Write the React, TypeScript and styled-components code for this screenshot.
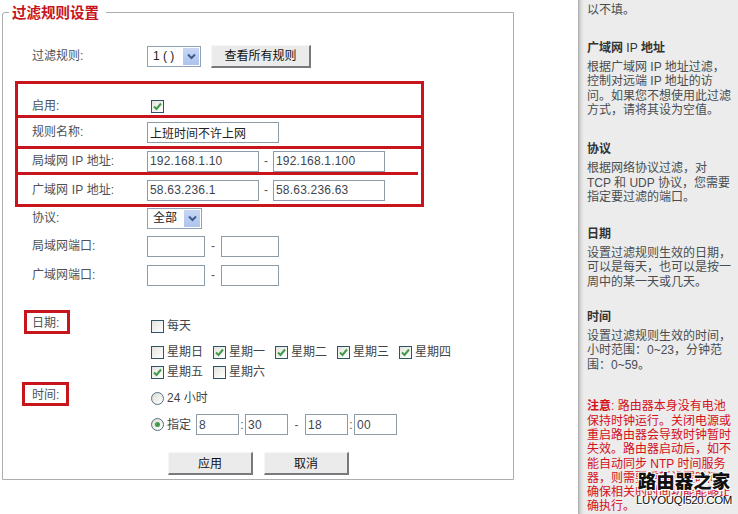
import React from "react";
import styled, { createGlobalStyle } from "styled-components";

const cjk = `"Liberation Sans", "Noto Sans CJK SC", sans-serif`;
const red = "#c8141c";

const Global = createGlobalStyle`
  html, body { margin: 0; padding: 0; height: 514px; overflow: hidden; background: #fff; }
  body { font: 12px/1.2 ${cjk}; color: #4a4f55; }
`;

const Page = styled.div`
  position: relative;
  display: flex;
  width: 738px;
  height: 514px;
  overflow: hidden;
`;
const Main = styled.main`
  width: 578px;
  flex: none;
  padding-left: 2px;
  box-sizing: border-box;
`;
const Frame = styled.fieldset`
  width: 512px;
  height: 480px;
  box-sizing: border-box;
  margin: 0;
  padding: 20px 0 0 29px;
  border: 1px solid #acacac;
  border-radius: 3px 0 0 0;
`;
const Title = styled.legend`
  margin-left: -23px;
  padding: 0 7px 0 3px;
  font-size: 14.5px;
  font-weight: 700;
  line-height: 24px;
  color: ${red};
  font-family: "Noto Sans CJK SC", sans-serif;
`;
const Row = styled.div<{ $h: number; $mt?: number }>`
  display: flex;
  align-items: center;
  height: ${(p) => p.$h}px;
  margin-top: ${(p) => p.$mt ?? 0}px;
`;
const Label = styled.label<{ $up?: number }>`
  width: 115px;
  flex: none;
  color: #4d5257;
  transform: translateY(${(p) => -(p.$up ?? 0)}px);
  word-spacing: 0.5px;
`;
const DateLabel = styled(Label)`
  padding-top: 27px;
`;
const Field = styled.input<{ $w: number }>`
  width: ${(p) => p.$w}px;
  height: 21px;
  box-sizing: border-box;
  padding: 0 2px;
  border: 1px solid #8e9ca8;
  background: #fff;
  font: 12px ${cjk};
  letter-spacing: 0.2px;
  color: #3d4550;
  outline: none;
`;
const NameField = styled(Field)`
  color: #222;
  letter-spacing: 0;
`;
const Sep = styled.span<{ $w: number }>`
  width: ${(p) => p.$w}px;
  flex: none;
  text-align: center;
  color: #555;
`;
const SelectBox = styled.div<{ $w: number }>`
  width: ${(p) => p.$w}px;
  height: 21px;
  box-sizing: border-box;
  border: 1px solid #8ea2b8;
  display: flex;
  align-items: center;
  justify-content: space-between;
  padding: 1px 1px 1px 5px;
  background: #fff;
  color: #222;
`;
const SelectArrow = styled.span`
  width: 16px;
  height: 17px;
  background: linear-gradient(#c7d6f4, #aec4ec);
  display: flex;
  align-items: center;
  justify-content: center;
`;
const Btn = styled.button<{ $w: number }>`
  width: ${(p) => p.$w}px;
  height: 23px;
  box-sizing: border-box;
  padding: 0 0 2px;
  border: 0;
  border-top: 1px solid #f6f6f6;
  border-left: 1px solid #f6f6f6;
  border-right: 2px solid #77797c;
  border-bottom: 2px solid #77797c;
  background: #ebebeb;
  font: 12px ${cjk};
  color: #111;
`;
const RuleBtn = styled(Btn)`
  margin-left: 10px;
`;
const BtnRow = styled.div`
  display: flex;
  gap: 11px;
  margin: 17px 0 0 136px;
`;
const Block = styled.div`
  display: flex;
`;
const Options = styled.div`
  padding: 30px 0 0 4px;
`;
const Week = styled.div`
  display: grid;
  grid-template-columns: repeat(5, 62px);
  grid-auto-rows: 20px;
  margin-top: 9px;
`;
const Opt = styled.span`
  display: flex;
  align-items: center;
  gap: 3px;
  color: #444;
`;
const Indented = styled(Opt)`
  padding-left: 4px;
`;
const Check = styled.span`
  width: 13px;
  height: 13px;
  flex: none;
  box-sizing: border-box;
  border: 1px solid #2d5566;
  background: linear-gradient(135deg, #e4e4de, #fff);
  display: flex;
  align-items: center;
  justify-content: center;
`;
const Radio = styled.span`
  width: 13px;
  height: 13px;
  flex: none;
  box-sizing: border-box;
  border: 1px solid #56707f;
  border-radius: 50%;
  background: linear-gradient(135deg, #dcdcd6, #fff);
  display: flex;
  align-items: center;
  justify-content: center;
`;
const Dot = styled.span`
  width: 5px;
  height: 5px;
  border-radius: 50%;
  background: #3f9a4c;
`;

const Side = styled.aside`
  flex: 1;
  box-sizing: border-box;
  padding: 3px 6px 0 9px;
  background: linear-gradient(90deg, #ababab 0, #dcdcdc 3px, #ececec 6px);
  line-height: 14.6px;
  color: #4a4d50;
`;
const Help = styled.section<{ $mt: number }>`
  margin-top: ${(p) => p.$mt}px;
`;
const HelpTitle = styled.h3`
  margin: 0 0 4px;
  font-size: 12px;
  line-height: 15px;
  font-weight: 700;
  color: #333;
`;
const Thin = styled.span`
  font-weight: 400;
`;
const HelpText = styled.p`
  margin: 0;
  white-space: nowrap;
`;
const Note = styled.p`
  margin: 27px 0 0;
  white-space: nowrap;
  line-height: 14.3px;
  color: #d4101c;
`;
const Strong = styled.b`
  font-weight: 700;
`;
const Outline = styled.div<{ $l: number; $t: number; $w: number; $h: number }>`
  position: absolute;
  left: ${(p) => p.$l}px;
  top: ${(p) => p.$t}px;
  width: ${(p) => p.$w}px;
  height: ${(p) => p.$h}px;
  box-sizing: border-box;
  border: 3px solid ${red};
  pointer-events: none;
`;
const Rule = styled.div<{ $t: number; $w: number }>`
  position: absolute;
  left: 15px;
  top: ${(p) => p.$t}px;
  width: ${(p) => p.$w}px;
  height: 3px;
  background: ${red};
`;
const Mark = styled.div`
  position: absolute;
  left: 632px;
  top: 468px;
  width: 104px;
  text-align: center;
  color: #111;
  pointer-events: none;
`;
const MarkName = styled.div`
  font: 900 18.5px/25px "Noto Sans CJK SC", sans-serif;
  text-shadow: 1px 1px 0 #fff, -1px -1px 0 #fff, 1px -1px 0 #fff, -1px 1px 0 #fff;
`;
const MarkUrl = styled.div`
  font: 11.5px/13px "Liberation Sans", sans-serif;
  letter-spacing: -0.35px;
  text-shadow: 1px 1px 0 #fff, -1px -1px 0 #fff;
  margin-top: 1px;
`;

const Chevron = () => (
  <svg width="9" height="7" viewBox="0 0 9 7">
    <path d="M1 1.5 4.5 5 8 1.5" fill="none" stroke="#3f5b91" strokeWidth="2" />
  </svg>
);
const Tick = () => (
  <svg width="9" height="9" viewBox="0 0 9 9">
    <path d="M1 4.5 3.5 7 8 1.5" fill="none" stroke="#3f9a4c" strokeWidth="2" />
  </svg>
);
const Box = ({ on }: { on?: boolean }) => <Check>{on && <Tick />}</Check>;
const Day = ({ on, t }: { on?: boolean; t: string }) => (
  <Opt>
    <Box on={on} />
    {t}
  </Opt>
);
const v = (s: string, w: number) => <Field $w={w} defaultValue={s} readOnly />;

export default function App() {
  return (
    <Page>
      <Global />
      <Main>
        <Frame>
          <Title>过滤规则设置</Title>
          <Row $h={24}>
            <Label>过滤规则:</Label>
            <SelectBox $w={54}>
              1 ( )
              <SelectArrow><Chevron /></SelectArrow>
            </SelectBox>
            <RuleBtn $w={100}>查看所有规则</RuleBtn>
          </Row>
          <Row $h={24} $mt={26}>
            <Label>启用:</Label>
            <Indented><Box on /></Indented>
          </Row>
          <Row $h={28}>
            <Label>规则名称:</Label>
            <NameField $w={132} defaultValue="上班时间不许上网" readOnly />
          </Row>
          <Row $h={28} $mt={1}>
            <Label>局域网 IP 地址:</Label>
            {v("192.168.1.10", 112)}
            <Sep $w={14}>-</Sep>
            {v("192.168.1.100", 112)}
          </Row>
          <Row $h={28} $mt={1}>
            <Label>广域网 IP 地址:</Label>
            {v("58.63.236.1", 112)}
            <Sep $w={14}>-</Sep>
            {v("58.63.236.63", 112)}
          </Row>
          <Row $h={28}>
            <Label>协议:</Label>
            <SelectBox $w={55}>
              全部
              <SelectArrow><Chevron /></SelectArrow>
            </SelectBox>
          </Row>
          <Row $h={28}>
            <Label>局域网端口:</Label>
            {v("", 58)}
            <Sep $w={16}>-</Sep>
            {v("", 58)}
          </Row>
          <Row $h={28} $mt={1}>
            <Label>广域网端口:</Label>
            {v("", 58)}
            <Sep $w={16}>-</Sep>
            {v("", 58)}
          </Row>
          <Block>
            <DateLabel as="div">日期:</DateLabel>
            <Options>
              <Day t="每天" />
              <Week>
                <Day t="星期日" />
                <Day on t="星期一" />
                <Day on t="星期二" />
                <Day on t="星期三" />
                <Day on t="星期四" />
                <Day on t="星期五" />
                <Day t="星期六" />
              </Week>
            </Options>
          </Block>
          <Row $h={20} $mt={6}>
            <Label $up={3}>时间:</Label>
            <Indented><Radio />24 小时</Indented>
          </Row>
          <Row $h={21} $mt={6}>
            <Label />
            <Indented><Radio><Dot /></Radio>指定</Indented>
            <Sep $w={5} />
            {v("8", 43)}
            <Sep $w={6}>:</Sep>
            {v("30", 43)}
            <Sep $w={17}>-</Sep>
            {v("18", 43)}
            <Sep $w={6}>:</Sep>
            {v("00", 43)}
          </Row>
          <BtnRow>
            <Btn $w={85}>应用</Btn>
            <Btn $w={85}>取消</Btn>
          </BtnRow>
        </Frame>
      </Main>
      <Side>
        <HelpText>以不填。</HelpText>
        <Help $mt={23}>
          <HelpTitle>广域网 <Thin>IP</Thin> 地址</HelpTitle>
          <HelpText>根据广域网 IP 地址过滤，<br />控制对远端 IP 地址的访<br />问。如果您不想使用此过滤<br />方式，请将其设为空值。</HelpText>
        </Help>
        <Help $mt={24}>
          <HelpTitle>协议</HelpTitle>
          <HelpText>根据网络协议过滤，对<br />TCP 和 UDP 协议，您需要<br />指定要过滤的端口。</HelpText>
        </Help>
        <Help $mt={22}>
          <HelpTitle>日期</HelpTitle>
          <HelpText>设置过滤规则生效的日期，<br />可以是每天，也可以是按一<br />周中的某一天或几天。</HelpText>
        </Help>
        <Help $mt={20}>
          <HelpTitle>时间</HelpTitle>
          <HelpText>设置过滤规则生效的时间，<br />小时范围：0~23，分钟范<br />围：0~59。</HelpText>
        </Help>
        <Note><Strong>注意</Strong>: 路由器本身没有电池<br />保持时钟运行。关闭电源或<br />重启路由器会导致时钟暂时<br />失效。路由器启动后，如不<br />能自动同步 NTP 时间服务<br />器，则需要重新设置时间，<br />确保相关的时间功能能够正<br />确执行。</Note>
      </Side>
      <Outline $l={15} $t={81} $w={409} $h={126} />
      <Rule $t={115} $w={409} />
      <Rule $t={146} $w={409} />
      <Rule $t={172} $w={403} />
      <Outline $l={24} $t={310} $w={46} $h={24} />
      <Outline $l={22} $t={382} $w={47} $h={24} />
      <Mark>
        <MarkName>路由器之家</MarkName>
        <MarkUrl>LUYOUQI520.COM</MarkUrl>
      </Mark>
    </Page>
  );
}
